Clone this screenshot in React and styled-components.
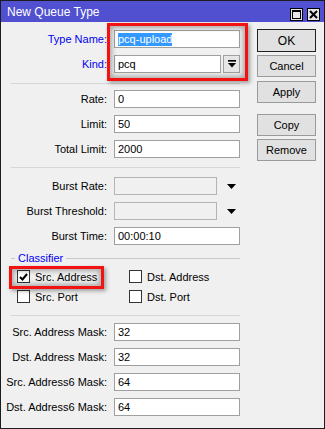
import React from "react";
import styled, { createGlobalStyle } from "styled-components";

const GlobalStyle = createGlobalStyle`
  body {
    margin: 0;
    font-family: "Liberation Sans", Arial, sans-serif;
    font-size: 11px;
  }
`;

function App() {
  return (
    <>
      <GlobalStyle />
      <Window>
        <TitleBar>
          <span>New Queue Type</span>
          <TitleButtons>
            <TitleButton>
              <svg width="9" height="9" viewBox="0 0 9 9">
                <rect x="0.5" y="0.5" width="8" height="8" fill="none" stroke="#000" />
                <rect x="0" y="0" width="9" height="2" fill="#000" />
              </svg>
            </TitleButton>
            <TitleButton>
              <svg width="9" height="9" viewBox="0 0 9 9">
                <path d="M1 1 L8 8 M8 1 L1 8" stroke="#000" strokeWidth="2" />
              </svg>
            </TitleButton>
          </TitleButtons>
        </TitleBar>

        <Body>
          <Form>
            <Row>
              <Label $blue>Type Name:</Label>
              <Input>
                <Selected>pcq-upload</Selected>
              </Input>
            </Row>
            <Row>
              <Label $blue>Kind:</Label>
              <SelectWrap>
                <Input>pcq</Input>
                <DropButton>
                  <svg width="8" height="8" viewBox="0 0 8 8">
                    <rect x="0" y="0" width="8" height="1.6" fill="#000" />
                    <polygon points="0,3 8,3 4,7.5" fill="#000" />
                  </svg>
                </DropButton>
              </SelectWrap>
            </Row>

            <Separator $top={10} $bottom={6} />

            <Row>
              <Label>Rate:</Label>
              <Input>0</Input>
            </Row>
            <Row>
              <Label>Limit:</Label>
              <Input>50</Input>
            </Row>
            <Row>
              <Label>Total Limit:</Label>
              <Input>2000</Input>
            </Row>

            <Separator $top={9} $bottom={9} />

            <Row>
              <Label>Burst Rate:</Label>
              <SelectWrap>
                <Input $disabled />
                <Arrow>
                  <svg width="9" height="5" viewBox="0 0 9 5">
                    <polygon points="0,0 9,0 4.5,5" fill="#000" />
                  </svg>
                </Arrow>
              </SelectWrap>
            </Row>
            <Row>
              <Label>Burst Threshold:</Label>
              <SelectWrap>
                <Input $disabled />
                <Arrow>
                  <svg width="9" height="5" viewBox="0 0 9 5">
                    <polygon points="0,0 9,0 4.5,5" fill="#000" />
                  </svg>
                </Arrow>
              </SelectWrap>
            </Row>
            <Row>
              <Label>Burst Time:</Label>
              <Input>00:00:10</Input>
            </Row>

            <Group>
              <Legend>
                <span>Classifier</span>
              </Legend>
              <Checks>
                <Check>
                  <Box>
                    <svg width="9" height="8" viewBox="0 0 9 8">
                      <path d="M1 4 L3.5 6.5 L8 1" fill="none" stroke="#000" strokeWidth="2" />
                    </svg>
                  </Box>
                  Src. Address
                </Check>
                <Check>
                  <Box />
                  Dst. Address
                </Check>
                <Check>
                  <Box />
                  Src. Port
                </Check>
                <Check>
                  <Box />
                  Dst. Port
                </Check>
              </Checks>
            </Group>

            <Separator $top={12} $bottom={7} />

            <Row>
              <Label>Src. Address Mask:</Label>
              <Input>32</Input>
            </Row>
            <Row>
              <Label>Dst. Address Mask:</Label>
              <Input>32</Input>
            </Row>
            <Row>
              <Label>Src. Address6 Mask:</Label>
              <Input>64</Input>
            </Row>
            <Row>
              <Label>Dst. Address6 Mask:</Label>
              <Input>64</Input>
            </Row>
          </Form>

          <Buttons>
            <Button $default $gap={3}>OK</Button>
            <Button $gap={4}>Cancel</Button>
            <Button $gap={11}>Apply</Button>
            <Button $gap={3}>Copy</Button>
            <Button>Remove</Button>
          </Buttons>
        </Body>

        <Highlight style={{ left: 106, top: 22, width: 141, height: 58 }} />
        <Highlight style={{ left: 8, top: 265, width: 95, height: 23 }} />
      </Window>
    </>
  );
}

const Window = styled.div`
  position: relative;
  width: 325px;
  height: 429px;
  box-sizing: border-box;
  border: 1px solid #1c1c1c;
  display: flex;
  flex-direction: column;
  background: #f0f0f0;
  overflow: hidden;
`;

const TitleBar = styled.div`
  height: 21px;
  background: #5050d0;
  color: #fff;
  display: flex;
  align-items: center;
  justify-content: space-between;
  padding: 0 4px 0 6px;
  font-size: 12px;
  flex-shrink: 0;
`;

const TitleButtons = styled.div`
  display: flex;
  gap: 4px;
  margin-top: 5px;
`;

const TitleButton = styled.div`
  width: 13px;
  height: 13px;
  box-sizing: border-box;
  border: 1px solid #000;
  background: #e6e6e6;
  display: flex;
  align-items: center;
  justify-content: center;
`;

const Body = styled.div`
  flex: 1;
  display: flex;
  align-items: flex-start;
`;

const Form = styled.div`
  width: 239px;
  padding-top: 8px;
  display: flex;
  flex-direction: column;
  gap: 7px;
`;

const Row = styled.div`
  display: grid;
  grid-template-columns: 106px 1fr;
  column-gap: 7px;
  align-items: center;
  height: 18px;
`;

const Label = styled.div`
  text-align: right;
  white-space: nowrap;
  color: ${(p) => (p.$blue ? "#0000f0" : "#000")};
`;

const Input = styled.div`
  flex: 1;
  height: 18px;
  box-sizing: border-box;
  border: 1px solid ${(p) => (p.$disabled ? "#b4b4b4" : "#a0a0a0")};
  background: ${(p) => (p.$disabled ? "#f0f0f0" : "#fff")};
  padding: 0 3px;
  display: flex;
  align-items: center;
  line-height: 16px;
  color: #000;
`;

const Selected = styled.span`
  background: #3399ff;
  color: #fff;
  line-height: 13px;
`;

const SelectWrap = styled.div`
  display: flex;
  align-items: center;
  gap: 2px;
  height: 18px;
`;

const DropButton = styled.div`
  width: 17px;
  height: 18px;
  box-sizing: border-box;
  border: 1px solid #a0a0a0;
  background: #e6e6e6;
  display: flex;
  align-items: center;
  justify-content: center;
`;

const Arrow = styled.div`
  width: 17px;
  display: flex;
  justify-content: center;
  padding-left: 4px;
`;

const Separator = styled.div`
  height: 1px;
  background: #d7d7d7;
  margin: ${(p) => p.$top - 7}px 0 ${(p) => p.$bottom - 7}px 10px;
`;

const Group = styled.div`
  display: flex;
  flex-direction: column;
  margin-top: -1px;
`;

const Legend = styled.div`
  display: flex;
  align-items: center;
  height: 14px;
  margin-left: 10px;
  color: #0000f0;

  &::before {
    content: "";
    width: 4px;
    height: 1px;
    background: #c8c8c8;
    margin-right: 3px;
  }

  &::after {
    content: "";
    flex: 1;
    height: 1px;
    background: #c8c8c8;
    margin-left: 3px;
  }
`;

const Checks = styled.div`
  display: grid;
  grid-template-columns: 112px 1fr;
  row-gap: 7px;
  padding: 5px 0 0 16px;
`;

const Check = styled.div`
  display: flex;
  align-items: center;
  gap: 5px;
  height: 13px;
  white-space: nowrap;
`;

const Box = styled.div`
  width: 13px;
  height: 13px;
  box-sizing: border-box;
  border: 1px solid #333;
  background: #fff;
  display: flex;
  align-items: center;
  justify-content: center;
`;

const Buttons = styled.div`
  margin-left: 17px;
  padding-top: 7px;
  display: flex;
  flex-direction: column;
`;

const Button = styled.div`
  width: 59px;
  height: ${(p) => (p.$default ? 23 : 22)}px;
  box-sizing: border-box;
  border: 1px solid ${(p) => (p.$default ? "#222" : "#9a9a9a")};
  background: #e1e1e1;
  display: flex;
  align-items: center;
  justify-content: center;
  margin-bottom: ${(p) => p.$gap || 0}px;
  font-size: ${(p) => (p.$default ? 12 : 11)}px;
`;

const Highlight = styled.div`
  position: absolute;
  box-sizing: border-box;
  border: 3px solid #f21212;
  box-shadow: inset 0 0 5px 2px rgba(0, 0, 0, 0.3), 2px 2px 4px rgba(0, 0, 0, 0.35);
  pointer-events: none;
`;

export default App;
